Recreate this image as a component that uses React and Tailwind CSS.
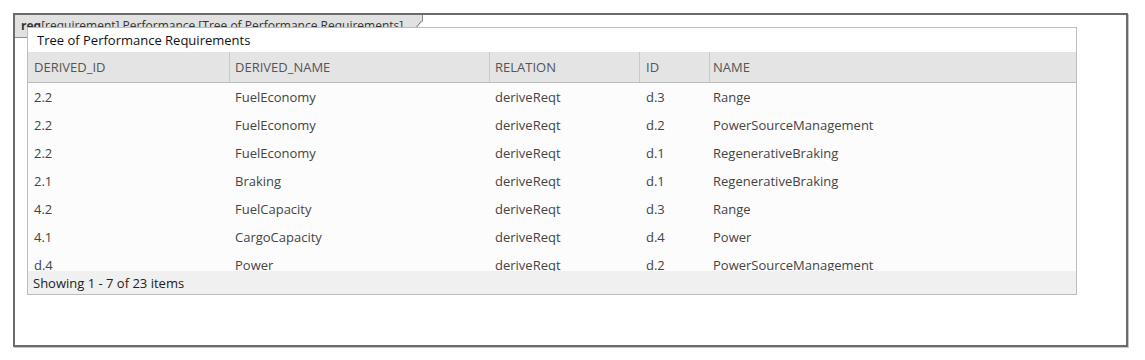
import React from "react";

const rows = [
  ["2.2", "FuelEconomy", "deriveReqt", "d.3", "Range"],
  ["2.2", "FuelEconomy", "deriveReqt", "d.2", "PowerSourceManagement"],
  ["2.2", "FuelEconomy", "deriveReqt", "d.1", "RegenerativeBraking"],
  ["2.1", "Braking", "deriveReqt", "d.1", "RegenerativeBraking"],
  ["4.2", "FuelCapacity", "deriveReqt", "d.3", "Range"],
  ["4.1", "CargoCapacity", "deriveReqt", "d.4", "Power"],
  ["d.4", "Power", "deriveReqt", "d.2", "PowerSourceManagement"],
];

const cols = [
  { name: "DERIVED_ID", w: "w-[201px]", pad: "pl-[6px]" },
  { name: "DERIVED_NAME", w: "w-[260px]", pad: "pl-[5px]" },
  { name: "RELATION", w: "w-[150px]", pad: "pl-[5px]" },
  { name: "ID", w: "w-[70px]", pad: "pl-[6px]" },
  { name: "NAME", w: "flex-1", pad: "pl-[3px]" },
];

export default function App() {
  return (
    <div
      className="w-[1145px] h-[360px] bg-white pt-[13px] pl-[13px]"
      style={{ fontFamily: '"Open Sans", "Noto Sans", sans-serif' }}
    >
      <div className="w-[1115px] h-[334px] border-2 border-[#6b6b6b] shadow-[1px_1px_0_#c4c4c4] bg-white">
        <div className="relative w-[408px] h-[23px] bg-[#e1e1e1] border-b border-[#8c8c8c] [clip-path:polygon(0_0,100%_0,100%_6px,calc(100%-5px)_12px,calc(100%-5px)_100%,0_100%)] border-r border-r-[#8c8c8c]">
          <div className="pl-[6px] pt-[3px] text-[12px] leading-[16px] text-[#333] whitespace-nowrap">
            <span className="font-bold">req</span>[requirement] Performance [Tree of Performance Requirements]
          </div>
          <svg className="absolute right-0 top-0" width="6" height="13" viewBox="0 0 6 13">
            <line x1="5.5" y1="6" x2="0.5" y2="12" stroke="#7a7a7a" strokeWidth="1" />
          </svg>
        </div>
        <div className="relative ml-[12px] -mt-[11px] w-[1050px] h-[268px] border border-[#bdbdbd] bg-white flex flex-col">
          <div className="h-[24px] pl-[9px] text-[13px] leading-[24px] text-[#111]">
            Tree of Performance Requirements
          </div>
          <div className="flex h-[31px] bg-[#e4e4e4] border-b border-[#bcbcbc] text-[13px] text-[#555]">
            {cols.map((c, i) => (
              <div
                key={c.name}
                className={`${c.w} ${c.pad} pt-[2px] flex items-center ${i > 0 ? "border-l border-[#c9c9c9]" : ""}`}
              >
                {c.name}
              </div>
            ))}
          </div>
          <div className="h-[188px] overflow-hidden bg-[#fcfcfc] text-[13px] text-[#444]">
            {rows.map((r, ri) => (
              <div key={ri} className="flex h-[28px] pt-[2px] items-center">
                {r.map((v, i) => (
                  <div key={i} className={`${cols[i].w} ${cols[i].pad} ${i > 0 ? "border-l border-transparent" : ""}`}>
                    {v}
                  </div>
                ))}
              </div>
            ))}
          </div>
          <div className="flex-1 bg-[#f0f0f0] pl-[5px] pt-[1px] text-[13px] leading-[22px] text-[#222]">
            Showing 1 - 7 of 23 items
          </div>
        </div>
      </div>
    </div>
  );
}
